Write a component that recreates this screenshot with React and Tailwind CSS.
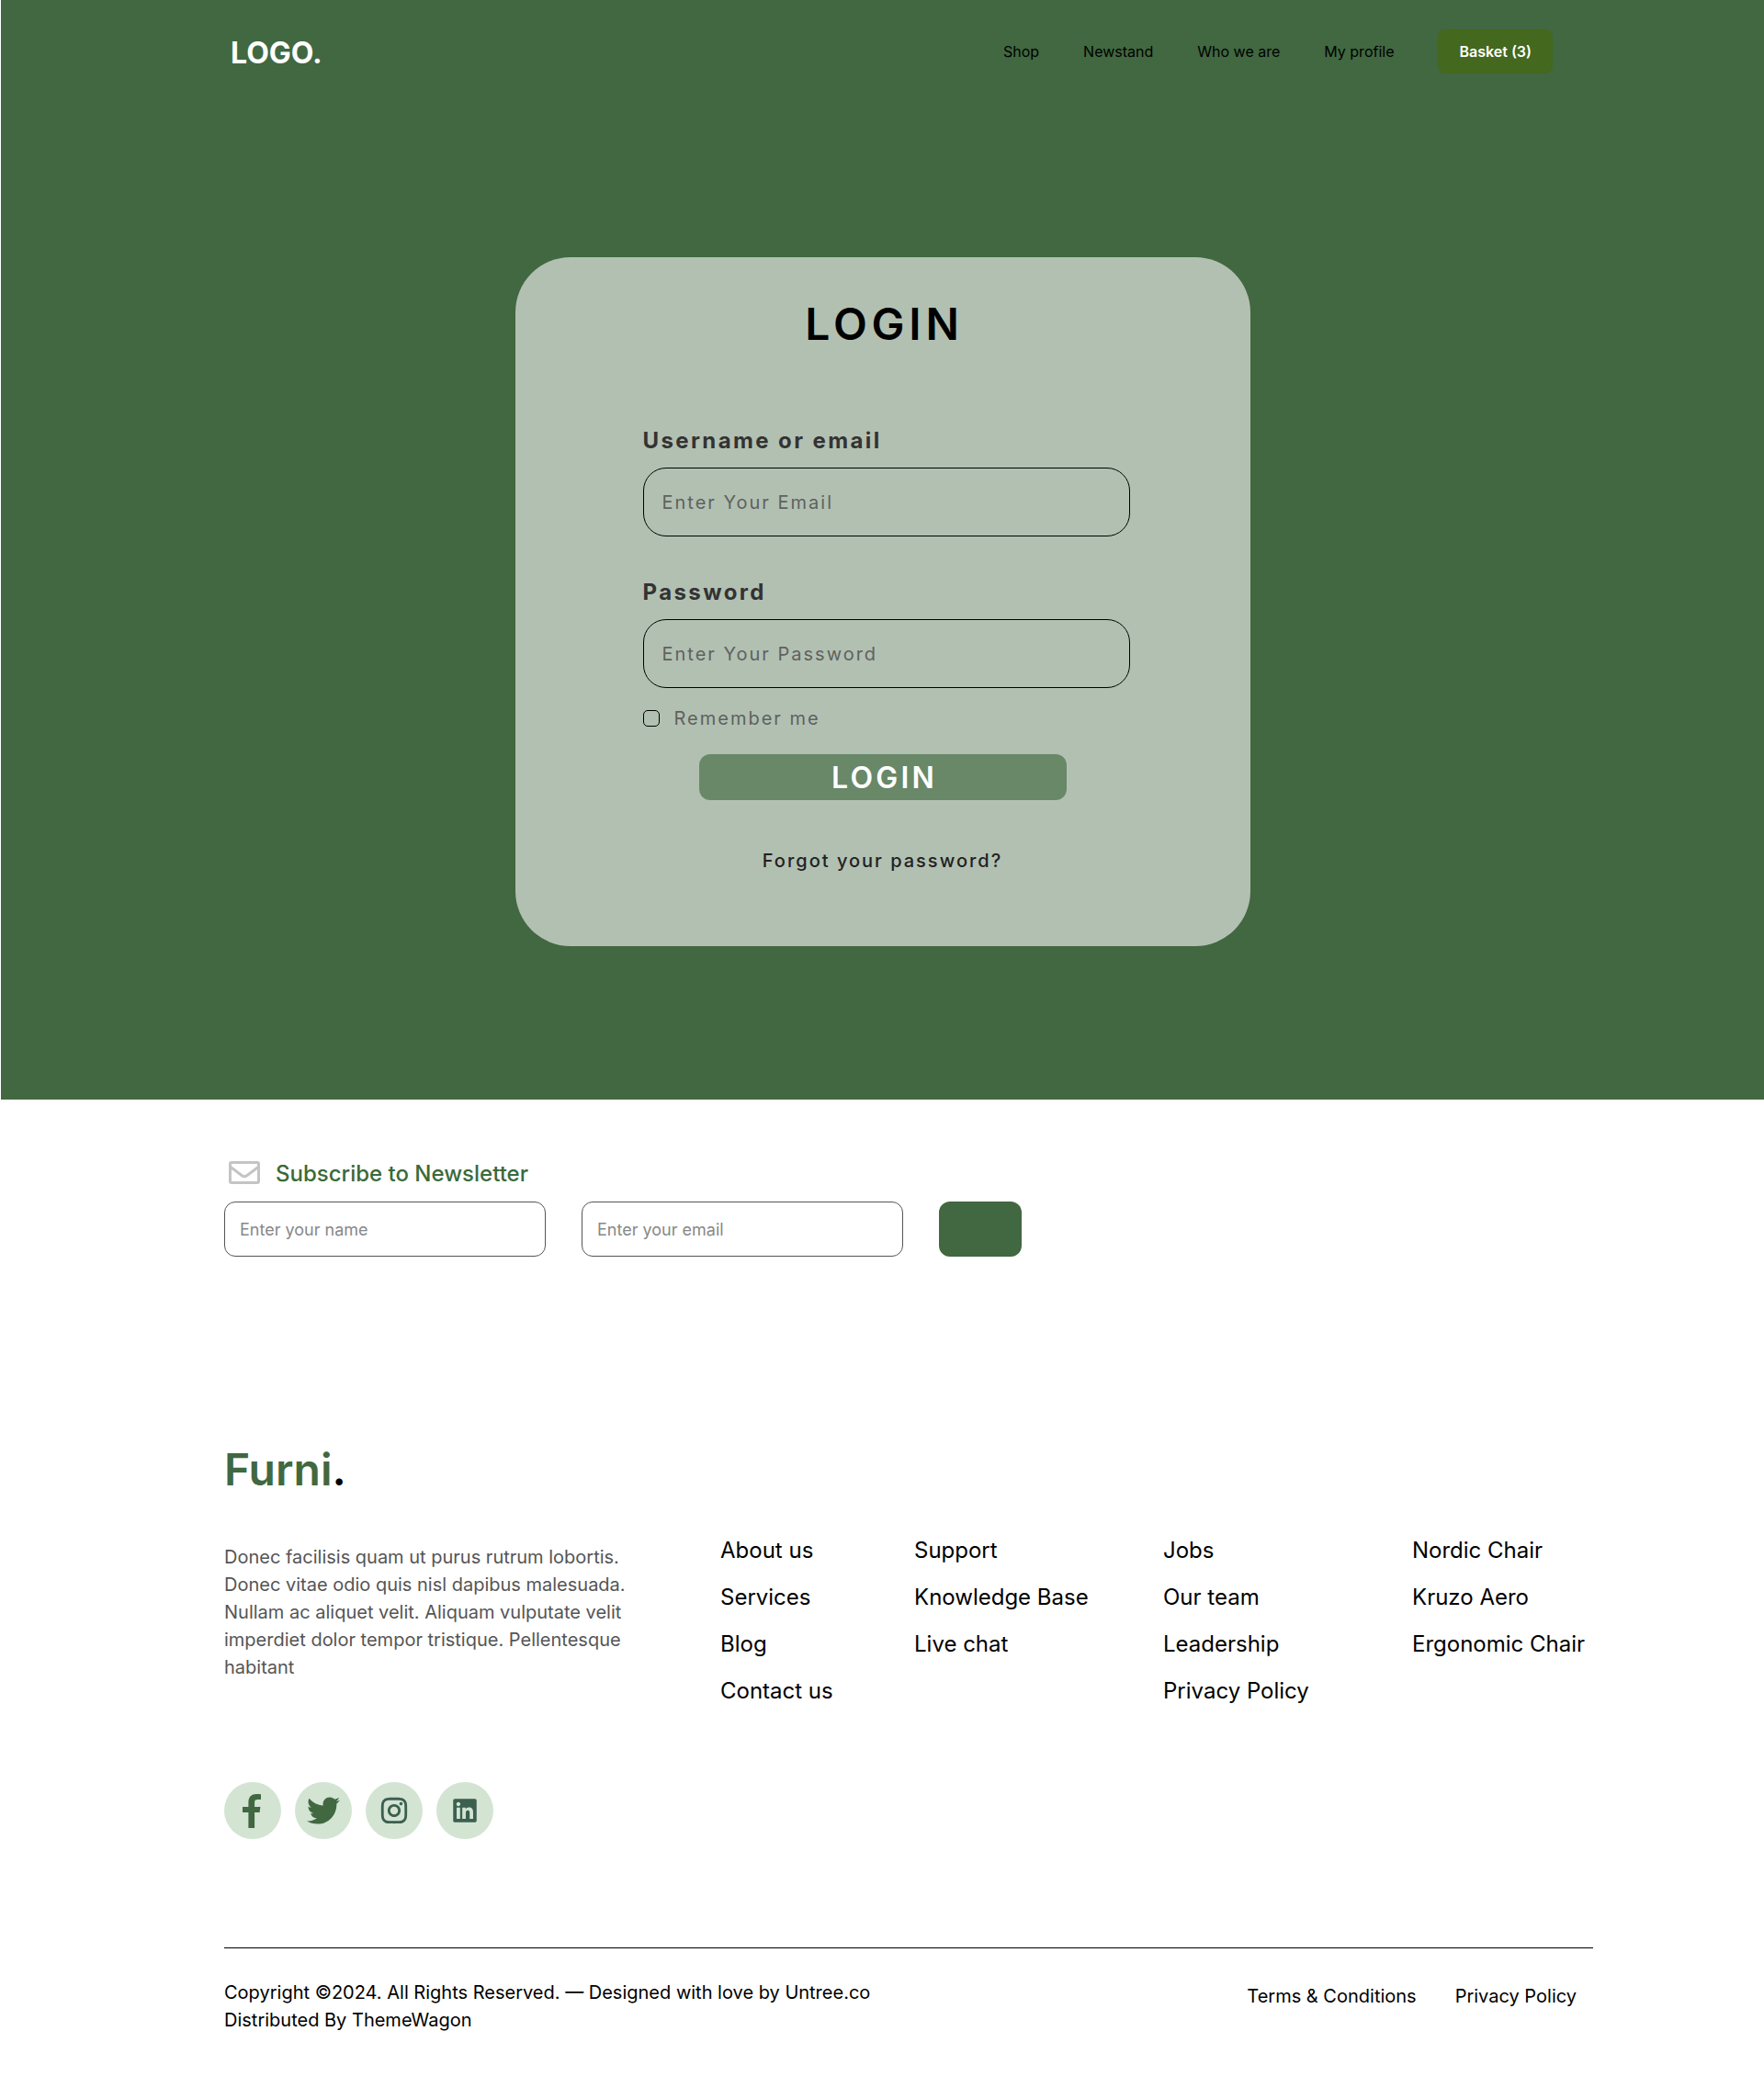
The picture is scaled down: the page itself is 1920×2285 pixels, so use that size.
import React from "react";
import { RiInstagramLine, RiLinkedinBoxFill } from "react-icons/ri";
import { FaTwitter } from "react-icons/fa";

const navLinks = ["Shop", "Newstand", "Who we are", "My profile"];

const footerColumns = [
  ["About us", "Services", "Blog", "Contact us"],
  ["Support", "Knowledge Base", "Live chat"],
  ["Jobs", "Our team", "Leadership", "Privacy Policy"],
  ["Nordic Chair", "Kruzo Aero", "Ergonomic Chair"],
];

function FacebookIcon() {
  return (
    <svg viewBox="0 0 22 37" className="h-[37px] w-[22px]" fill="currentColor" aria-hidden="true">
      <path d="M20 .3V6h-3.4c-2.8 0-3.5 1.200-3.500 3.200v4.900H19.400l-.8 6H13.100V37H6.400V20.100H0v-6h6.400V9C6.400 3.200 9.900 0 15.100 0c2.500 0 4.100.150 4.900.3z" />
    </svg>
  );
}

function MailIcon() {
  return (
    <svg
      viewBox="0 0 34 25"
      className="mt-0.5 h-[25px] w-[34px] text-[#c4c4c4]"
      fill="none"
      stroke="currentColor"
      strokeWidth="3"
      strokeLinejoin="round"
      aria-hidden="true"
    >
      <rect x="1.500" y="1.500" width="31" height="22" rx="1.500" />
      <path d="M2 6.500l12.300 9.200c1.800 1.300 3.600 1.300 5.400 0L32 6.500" />
    </svg>
  );
}

const socials = [
  { label: "Facebook", icon: <FacebookIcon /> },
  { label: "Twitter", icon: <FaTwitter className="size-9" /> },
  { label: "Instagram", icon: <RiInstagramLine className="size-[34px] text-[#3c5f50]" /> },
  { label: "LinkedIn", icon: <RiLinkedinBoxFill className="size-[34px] text-[#3c5f50]" /> },
];

function Field({ id, label, type, placeholder }) {
  return (
    <div className="flex flex-col gap-[13px]">
      <label htmlFor={id} className="text-2xl leading-8 font-bold tracking-widest text-[#333]">
        {label}
      </label>
      <input
        id={id}
        type={type}
        placeholder={placeholder}
        className="h-[75px] w-full rounded-[25px] border border-black bg-transparent px-5 text-xl tracking-widest placeholder:text-[#5e625e]"
      />
    </div>
  );
}

function Hero() {
  return (
    <div className="ml-px bg-[#416840] pt-8 pb-[167px]">
      <header className="flex items-center justify-between pr-[230px] pl-[250px]">
        <a href="#" className="pt-1 text-[32px] leading-10 font-bold text-white">
          LOGO.
        </a>
        <nav className="flex items-center gap-12 text-base text-black">
          {navLinks.map((item) => (
            <a key={item} href="#">
              {item}
            </a>
          ))}
          <button type="button" className="h-12 rounded-lg bg-[#43681e] px-[23px] font-semibold text-white">
            Basket (3)
          </button>
        </nav>
      </header>

      <form
        className="mx-auto mt-[200px] w-full max-w-[800px] rounded-[60px] bg-[#b2c0b2] pt-11 pb-[78px]"
        onSubmit={(e) => e.preventDefault()}
      >
        <h1 className="pl-1 text-center text-5xl leading-[58px] font-semibold tracking-widest text-black">LOGIN</h1>
        <div className="mt-[82px] mr-[131px] ml-[139px] flex flex-col gap-[45px]">
          <Field id="username" label="Username or email" type="text" placeholder="Enter Your Email" />
          <Field id="password" label="Password" type="password" placeholder="Enter Your Password" />
        </div>
        <div className="mt-[18px] ml-[139px] flex items-center gap-4">
          <input
            id="remember"
            type="checkbox"
            className="size-[18px] appearance-none rounded-[5px] border border-black checked:bg-[#416840]"
          />
          <label htmlFor="remember" className="text-xl leading-[30px] tracking-widest text-[#5e625e]">
            Remember me
          </label>
        </div>
        <button
          type="submit"
          className="mx-auto mt-6 block h-[50px] w-1/2 rounded-xl bg-[#688868] pt-0.5 pl-1 text-[32px] leading-[48px] font-semibold tracking-widest text-white"
        >
          LOGIN
        </button>
        <p className="mt-[51px] text-center text-xl leading-[30px] font-medium tracking-widest text-[#222]">
          <a href="#">Forgot your password?</a>
        </p>
      </form>
    </div>
  );
}

function Newsletter() {
  const field =
    "h-[60px] w-[350px] rounded-xl border border-[#555] bg-transparent px-4 text-lg placeholder:text-[#888]";
  return (
    <form onSubmit={(e) => e.preventDefault()}>
      <h2 className="flex items-start gap-[17px] pl-[5px] text-2xl leading-8 font-medium text-[#3a6a3a]">
        <MailIcon />
        Subscribe to Newsletter
      </h2>
      <div className="mt-3.5 flex gap-[39px]">
        <input type="text" aria-label="Name" placeholder="Enter your name" className={field} />
        <input type="email" aria-label="Email" placeholder="Enter your email" className={field} />
        <button type="submit" aria-label="Subscribe" className="h-[60px] w-[90px] rounded-xl bg-[#416840]" />
      </div>
    </form>
  );
}

export default function App() {
  return (
    <div className="min-h-screen bg-white font-['Inter',sans-serif] text-black">
      <Hero />
      <main className="pt-[65px] pr-[186px] pl-[244px]">
        <Newsletter />
      </main>
      <footer className="pt-[202px] pr-[186px] pb-10 pl-[244px]">
        <div className="text-5xl leading-[60px] font-semibold text-[#416840]">
          Furni<span className="text-black">.</span>
        </div>

        <div className="mt-8 grid grid-cols-[540fr_211fr_271fr_271fr_197fr]">
          <p className="w-[450px] pt-[18px] text-xl leading-[30px] text-[#555]">
            Donec facilisis quam ut purus rutrum lobortis. Donec vitae odio quis nisl dapibus malesuada. Nullam ac
            aliquet velit. Aliquam vulputate velit imperdiet dolor tempor tristique. Pellentesque habitant
          </p>
          {footerColumns.map((column) => (
            <ul key={column[0]} className="text-2xl leading-[51px] whitespace-nowrap">
              {column.map((item) => (
                <li key={item}>
                  <a href="#">{item}</a>
                </li>
              ))}
            </ul>
          ))}
        </div>

        <div className="mt-[74px] flex gap-[15px]">
          {socials.map(({ label, icon }) => (
            <a
              key={label}
              href="#"
              aria-label={label}
              className="flex size-[62px] items-center justify-center rounded-full bg-[#d3e4d3] text-[#416840]"
            >
              {icon}
            </a>
          ))}
        </div>

        <div className="mt-[118px] flex items-center justify-between border-t border-black pt-[33px] pr-[18px] text-xl leading-[30px]">
          <p>
            Copyright ©2024. All Rights Reserved. — Designed with love by Untree.co
            <br />
            Distributed By ThemeWagon
          </p>
          <div className="flex gap-[42px] self-start pt-1">
            <a href="#">Terms &amp; Conditions</a>
            <a href="#">Privacy Policy</a>
          </div>
        </div>
      </footer>
    </div>
  );
}
